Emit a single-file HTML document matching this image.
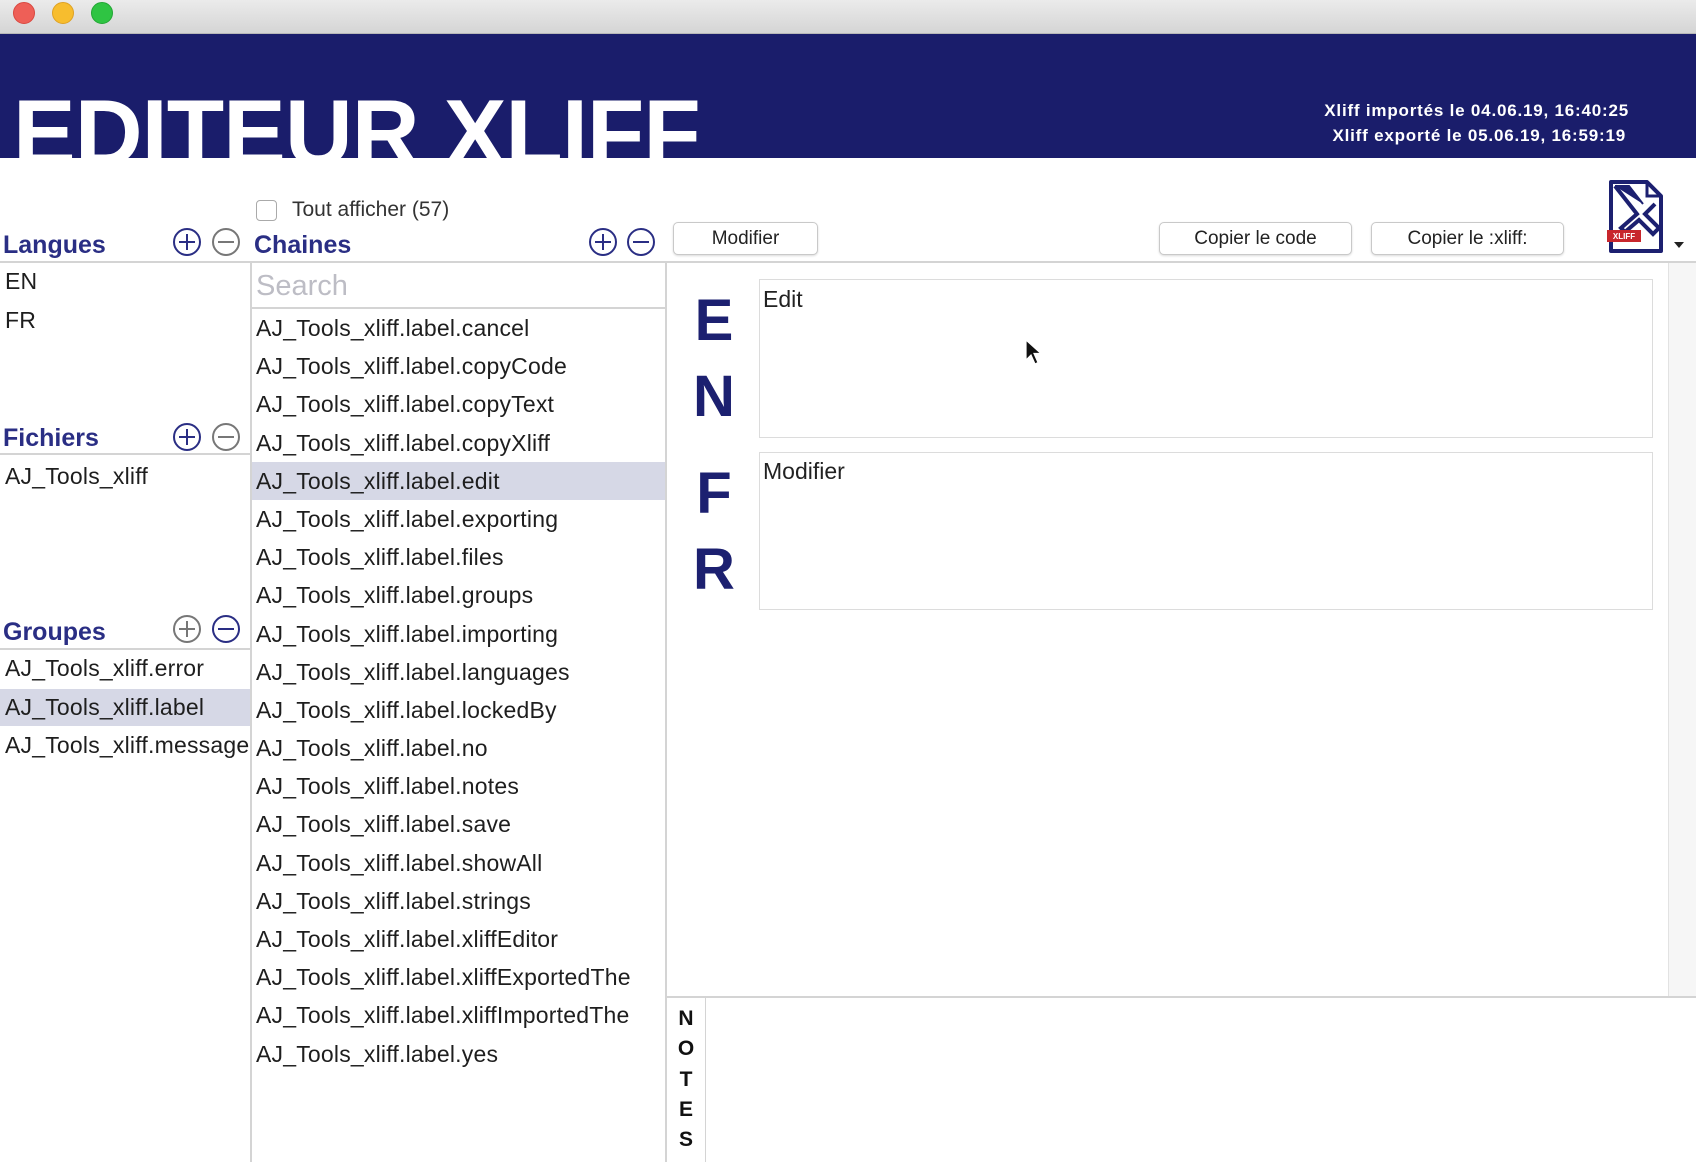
<!DOCTYPE html>
<html><head><meta charset="utf-8">
<style>
*{margin:0;padding:0;box-sizing:border-box}
body{width:1696px;height:1162px;overflow:hidden;background:#fff;font-family:"Liberation Sans",sans-serif;position:relative;color:#222}
.a{position:absolute}
.tb{left:0;top:0;width:1696px;height:34px;background:linear-gradient(#ebebeb,#d5d5d5);border-bottom:1px solid #b8b8b8}
.dot{width:22px;height:22px;border-radius:50%;top:2px}
.ban{left:0;top:34px;width:1696px;height:124px;background:#1a1d6b;overflow:hidden}
.title{left:13px;top:52px;font-size:94px;font-weight:bold;color:#fff;line-height:94px;letter-spacing:-1px;white-space:nowrap}
.info{right:67px;font-size:17px;font-weight:bold;color:#fff;text-align:right;line-height:20px;letter-spacing:0.8px}
.hd{font-size:25px;font-weight:bold;color:#2a2e84;line-height:30px}
.row{font-size:23px;line-height:38px;white-space:nowrap;color:#1e1e1e;overflow:hidden;letter-spacing:0.2px}
.hl{background:#d6d8e6}
.btn{height:33px;border:1px solid #c9c9c9;border-radius:5px;background:#fff;box-shadow:0 1px 2px rgba(0,0,0,.15);font-size:19px;text-align:center;line-height:31px;color:#222}
.big{font-size:58px;font-weight:bold;color:#1c2070;width:60px;text-align:center;line-height:60px}
.box{border:1px solid #dcdcdc;background:#fff}
.nl{font-size:21px;font-weight:bold;width:30px;text-align:center;line-height:30px;color:#111}
</style></head><body>
<div class="a tb"></div>
<div class="a dot" style="left:13px;background:#ee5f57;border:1px solid #d9473f"></div>
<div class="a dot" style="left:52px;background:#f7bd2e;border:1px solid #dea123"></div>
<div class="a dot" style="left:91px;background:#2fc443;border:1px solid #22a634"></div>
<div class="a ban"><div class="a title">EDITEUR XLIFF</div>
<div class="a info" style="top:67px">Xliff importés le 04.06.19, 16:40:25</div>
<div class="a info" style="top:92px;right:70px">Xliff exporté le 05.06.19, 16:59:19</div>
</div>

<div class="a" style="left:256px;top:200px;width:21px;height:21px;border:1px solid #aaa;border-radius:4px;background:#fff"></div>
<div class="a" style="left:292px;top:197px;font-size:21px;line-height:26px;color:#333">Tout afficher (57)</div>

<div class="a hd" style="left:3px;top:230px">Langues</div>
<div class="a hd" style="left:254px;top:230px">Chaines</div>
<div class="a hd" style="left:3px;top:423px">Fichiers</div>
<div class="a hd" style="left:3px;top:617px">Groupes</div>

<svg class="a" style="left:0;top:0" width="700" height="700">
<g fill="none" stroke-width="2">
<g stroke="#2a2e84"><circle cx="187" cy="242" r="13"/><path d="M187 234v16M179 242h16"/></g>
<g stroke="#777"><circle cx="226" cy="242" r="13"/><path d="M218 242h16"/></g>
<g stroke="#2a2e84"><circle cx="603" cy="242" r="13"/><path d="M603 234v16M595 242h16"/></g>
<g stroke="#2a2e84"><circle cx="641" cy="242" r="13"/><path d="M633 242h16"/></g>
<g stroke="#2a2e84"><circle cx="187" cy="437" r="13"/><path d="M187 429v16M179 437h16"/></g>
<g stroke="#777"><circle cx="226" cy="437" r="13"/><path d="M218 437h16"/></g>
<g stroke="#777"><circle cx="187" cy="629" r="13"/><path d="M187 621v16M179 629h16"/></g>
<g stroke="#2a2e84"><circle cx="226" cy="629" r="13"/><path d="M218 629h16"/></g>
</g></svg>

<div class="a" style="left:0;top:261px;width:1696px;height:2px;background:#d4d4d4"></div>
<div class="a" style="left:0;top:453px;width:250px;height:2px;background:#d4d4d4"></div>
<div class="a" style="left:0;top:648px;width:250px;height:2px;background:#d4d4d4"></div>
<div class="a" style="left:250px;top:262px;width:2px;height:900px;background:#d4d4d4"></div>
<div class="a" style="left:665px;top:262px;width:2px;height:900px;background:#d4d4d4"></div>

<div class="a row" style="left:5px;top:262px">EN</div>
<div class="a row" style="left:5px;top:301px">FR</div>
<div class="a row" style="left:5px;top:457px">AJ_Tools_xliff</div>
<div class="a row" style="left:5px;top:649px">AJ_Tools_xliff.error</div>
<div class="a row hl" style="left:0;top:689px;width:250px;height:37px;padding-left:5px;line-height:36px">AJ_Tools_xliff.label</div>
<div class="a row" style="left:5px;top:726px;width:245px">AJ_Tools_xliff.message</div>

<div class="a" style="left:252px;top:265px;width:413px;height:44px;border-bottom:2px solid #d4d4d4"></div>
<div class="a" style="left:256px;top:268px;font-size:29px;color:#bdbdc5;line-height:36px">Search</div>

<div class="a" style="left:252px;top:309px;width:413px">
<div class="row" style="padding-left:4px;height:38.2px">AJ_Tools_xliff.label.cancel</div>
<div class="row" style="padding-left:4px;height:38.2px">AJ_Tools_xliff.label.copyCode</div>
<div class="row" style="padding-left:4px;height:38.2px">AJ_Tools_xliff.label.copyText</div>
<div class="row" style="padding-left:4px;height:38.2px">AJ_Tools_xliff.label.copyXliff</div>
<div class="row hl" style="padding-left:4px;height:38.2px">AJ_Tools_xliff.label.edit</div>
<div class="row" style="padding-left:4px;height:38.2px">AJ_Tools_xliff.label.exporting</div>
<div class="row" style="padding-left:4px;height:38.2px">AJ_Tools_xliff.label.files</div>
<div class="row" style="padding-left:4px;height:38.2px">AJ_Tools_xliff.label.groups</div>
<div class="row" style="padding-left:4px;height:38.2px">AJ_Tools_xliff.label.importing</div>
<div class="row" style="padding-left:4px;height:38.2px">AJ_Tools_xliff.label.languages</div>
<div class="row" style="padding-left:4px;height:38.2px">AJ_Tools_xliff.label.lockedBy</div>
<div class="row" style="padding-left:4px;height:38.2px">AJ_Tools_xliff.label.no</div>
<div class="row" style="padding-left:4px;height:38.2px">AJ_Tools_xliff.label.notes</div>
<div class="row" style="padding-left:4px;height:38.2px">AJ_Tools_xliff.label.save</div>
<div class="row" style="padding-left:4px;height:38.2px">AJ_Tools_xliff.label.showAll</div>
<div class="row" style="padding-left:4px;height:38.2px">AJ_Tools_xliff.label.strings</div>
<div class="row" style="padding-left:4px;height:38.2px">AJ_Tools_xliff.label.xliffEditor</div>
<div class="row" style="padding-left:4px;height:38.2px">AJ_Tools_xliff.label.xliffExportedThe</div>
<div class="row" style="padding-left:4px;height:38.2px">AJ_Tools_xliff.label.xliffImportedThe</div>
<div class="row" style="padding-left:4px;height:38.2px">AJ_Tools_xliff.label.yes</div>
</div>

<div class="a btn" style="left:673px;top:222px;width:145px">Modifier</div>
<div class="a btn" style="left:1159px;top:222px;width:193px">Copier le code</div>
<div class="a btn" style="left:1371px;top:222px;width:193px">Copier le :xliff:</div>

<svg class="a" style="left:1605px;top:178px" width="88" height="78" viewBox="0 0 88 78">
<path d="M6 4h36l14 14v55H6z" fill="#fff" stroke="#1c2070" stroke-width="4" stroke-linejoin="round"/>
<path d="M42 4v14h14" fill="none" stroke="#1c2070" stroke-width="3"/>
<path d="M10 8l22 28-16 14 4 4 14-12 14 14 6-6-14-14 10-10" fill="none" stroke="#1c2070" stroke-width="4"/>
<path d="M10 8h14l14 18" fill="#1c2070" stroke="#1c2070" stroke-width="2"/>
<rect x="2" y="52" width="34" height="12" fill="#c8262c"/>
<text x="19" y="61" font-family="Liberation Sans" font-size="8" font-weight="bold" fill="#fff" text-anchor="middle">XLIFF</text>
<path d="M69 64h10l-5 6z" fill="#222"/>
</svg>

<div class="a big" style="left:684px;top:291px">E</div>
<div class="a big" style="left:684px;top:367px">N</div>
<div class="a big" style="left:684px;top:464px">F</div>
<div class="a big" style="left:684px;top:540px">R</div>

<div class="a box" style="left:759px;top:279px;width:894px;height:159px"></div>
<div class="a box" style="left:759px;top:452px;width:894px;height:158px"></div>
<div class="a" style="left:763px;top:286px;font-size:23px;line-height:26px;color:#222">Edit</div>
<div class="a" style="left:763px;top:458px;font-size:23px;line-height:26px;color:#222">Modifier</div>

<svg class="a" style="left:1024px;top:338px" width="20" height="30"><path d="M2 2v20l5-5 4 9 3-1.5-4-9h7z" fill="#111" stroke="#fff" stroke-width="1.2"/></svg>

<div class="a" style="left:1668px;top:263px;width:28px;height:734px;background:#f6f6f6;border-left:1px solid #e2e2e2"></div>

<div class="a" style="left:667px;top:996px;width:1029px;height:2px;background:#d4d4d4"></div>
<div class="a" style="left:705px;top:998px;width:1px;height:164px;background:#d4d4d4"></div>
<div class="a nl" style="left:671px;top:1004px">N</div>
<div class="a nl" style="left:671px;top:1034px">O</div>
<div class="a nl" style="left:671px;top:1065px">T</div>
<div class="a nl" style="left:671px;top:1095px">E</div>
<div class="a nl" style="left:671px;top:1125px">S</div>
</body></html>
